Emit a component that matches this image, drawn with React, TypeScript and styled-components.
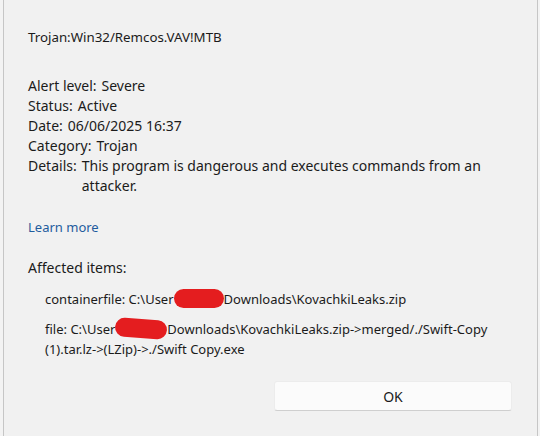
import React from 'react'
import styled, { createGlobalStyle } from 'styled-components'

const GlobalStyle = createGlobalStyle`
  html, body {
    margin: 0;
    padding: 0;
    background: #f3f3f3;
  }
  body {
    font-family: 'Noto Sans', 'Open Sans', sans-serif;
    color: #1b1b1b;
  }
`

const Window = styled.div`
  box-sizing: border-box;
  width: 535px;
  height: 436px;
  margin-left: 3px;
  border-left: 1px solid #c6c6c6;
  border-right: 1px solid #c6c6c6;
  background: #f1f1f1;
  padding: 27px 0 0 24px;
  display: flex;
  flex-direction: column;
`

const Title = styled.div`
  font-size: 13.3px;
  line-height: 20px;
  margin-bottom: 29px;
`

const InfoList = styled.div`
  display: flex;
  flex-direction: column;
  font-size: 14px;
  line-height: 20px;
`

const InfoRow = styled.div`
  display: flex;
  gap: 5px;
`

const Label = styled.span`
  flex: none;
`

const Value = styled.span`
  max-width: 410px;
`

const LearnMore = styled.a`
  margin-top: 21px;
  font-size: 13px;
  line-height: 20px;
  color: #1f5c9e;
  text-decoration: none;
  cursor: pointer;
`

const SectionHeading = styled.div`
  margin-top: 21px;
  font-size: 14px;
  line-height: 20px;
`

const ItemList = styled.div`
  display: flex;
  flex-direction: column;
  gap: 10px;
  padding-left: 17px;
  margin-top: 11px;
  font-size: 13px;
  line-height: 20px;
`

const Item = styled.div`
  max-width: 460px;
`

const ItemLine = styled.div`
  white-space: nowrap;
`

const Redaction = styled.span<{ $width: number; $tilt: number }>`
  display: inline-block;
  width: ${({ $width }) => $width}px;
  height: 19px;
  vertical-align: -4px;
  background: #e41d1f;
  border-radius: 10px;
  transform: rotate(${({ $tilt }) => $tilt}deg);
`

const Footer = styled.div`
  margin-top: auto;
  padding: 0 25px 25px 0;
  display: flex;
  justify-content: flex-end;
`

const Button = styled.button`
  width: 238px;
  height: 30px;
  background: #fbfbfb;
  border: 1px solid #ececec;
  border-bottom-color: #cfcfcf;
  border-radius: 3px;
  font-family: 'Noto Sans', 'Open Sans', sans-serif;
  font-size: 14px;
  color: #1b1b1b;
  cursor: pointer;
`

const details = [
  { label: 'Alert level:', value: 'Severe' },
  { label: 'Status:', value: 'Active' },
  { label: 'Date:', value: '06/06/2025 16:37' },
  { label: 'Category:', value: 'Trojan' },
  { label: 'Details:', value: 'This program is dangerous and executes commands from an attacker.' },
]

export default function App() {
  return (
    <>
      <GlobalStyle />
      <Window>
        <Title>Trojan:Win32/Remcos.VAV!MTB</Title>
        <InfoList>
          {details.map((d) => (
            <InfoRow key={d.label}>
              <Label>{d.label}</Label>
              <Value>{d.value}</Value>
            </InfoRow>
          ))}
        </InfoList>
        <LearnMore>Learn more</LearnMore>
        <SectionHeading>Affected items:</SectionHeading>
        <ItemList>
          <Item>
            <ItemLine>
              containerfile: C:\User
              <Redaction $width={50} $tilt={0} />
              Downloads\KovachkiLeaks.zip
            </ItemLine>
          </Item>
          <Item>
            <ItemLine>
              file: C:\User
              <Redaction $width={52} $tilt={4} />
              Downloads\KovachkiLeaks.zip-&gt;merged/./Swift-Copy
            </ItemLine>
            <ItemLine>(1).tar.lz-&gt;(LZip)-&gt;./Swift Copy.exe</ItemLine>
          </Item>
        </ItemList>
        <Footer>
          <Button>OK</Button>
        </Footer>
      </Window>
    </>
  )
}
